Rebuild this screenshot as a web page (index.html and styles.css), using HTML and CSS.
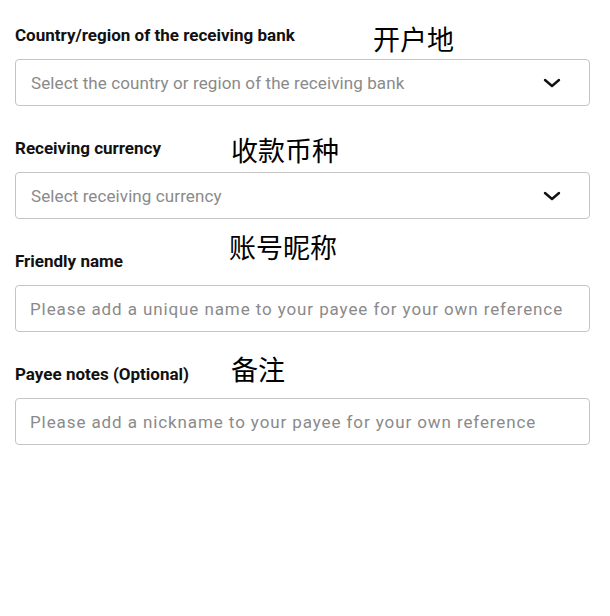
FILE: index.html
```html
<!DOCTYPE html>
<html lang="en">
<head>
<meta charset="UTF-8"/>
<title>Payee details</title>
<link rel="stylesheet" href="styles.css">
</head>
<body>
<div class="form">
  <div class="field">
    <div class="label-row">
      <label class="lbl">Country/region of the receiving bank</label>
      <span class="note n1">开户地</span>
    </div>
    <div class="box select">
      <span class="ph">Select the country or region of the receiving bank</span>
      <svg class="chev" width="18" height="10" viewBox="0 0 18 10"><path d="M2 2l7 6 7-6" fill="none" stroke="#111" stroke-width="2.4" stroke-linecap="round" stroke-linejoin="round"/></svg>
    </div>
  </div>
  <div class="field">
    <div class="label-row">
      <label class="lbl">Receiving currency</label>
      <span class="note n2">收款币种</span>
    </div>
    <div class="box select">
      <span class="ph">Select receiving currency</span>
      <svg class="chev" width="18" height="10" viewBox="0 0 18 10"><path d="M2 2l7 6 7-6" fill="none" stroke="#111" stroke-width="2.4" stroke-linecap="round" stroke-linejoin="round"/></svg>
    </div>
  </div>
  <div class="field">
    <div class="label-row">
      <label class="lbl">Friendly name</label>
      <span class="note n3">账号昵称</span>
    </div>
    <input class="box inp" type="text" placeholder="Please add a unique name to your payee for your own reference"/>
  </div>
  <div class="field">
    <div class="label-row">
      <label class="lbl">Payee notes (Optional)</label>
      <span class="note n4">备注</span>
    </div>
    <input class="box inp" type="text" placeholder="Please add a nickname to your payee for your own reference"/>
  </div>
</div>
</body>
</html>
```

FILE: styles.css
```css
*{box-sizing:border-box;margin:0;padding:0}
body{background:#fff;font-family:Roboto,'Noto Sans',sans-serif;color:#111}
.form{padding:23px 20px 0 15px;display:flex;flex-direction:column;gap:30px}
.field{display:flex;flex-direction:column}
.label-row{position:relative;height:24px;margin-bottom:12px;display:flex;align-items:center}
.lbl{font-size:17px;font-weight:700;color:#111}
.note{position:absolute;font-family:'Noto Sans CJK SC',sans-serif;font-size:27px;color:#000;line-height:1;white-space:nowrap}
.n1{left:358px;top:2px}
.n2{left:216px;top:0}
.n3{left:214px;top:-16px}
.n4{left:216px;top:-7px}
.box{width:575px;height:47px;border:1px solid #c4c4c4;border-radius:4px;background:#fff;display:flex;align-items:center}
.select{padding:0 28px 0 15px;justify-content:space-between}
.ph{font-size:17px;letter-spacing:.1px;color:#8a8a8a}
.inp{padding:0 14px;font-family:Roboto,sans-serif;font-size:17px;letter-spacing:.9px;color:#111;outline:none}
.inp::placeholder{color:#8a8a8a}
```
